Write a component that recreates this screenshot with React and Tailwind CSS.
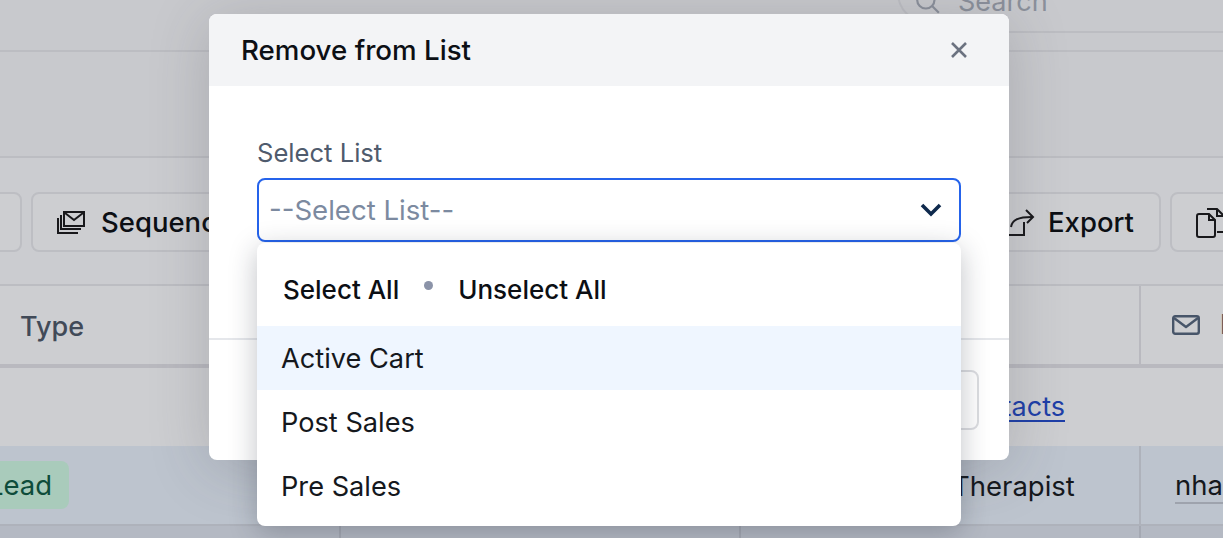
const font = { fontFamily: '"Inter", "Liberation Sans", sans-serif' };

function MailStackIcon() {
  return (
    <svg width="30" height="24" viewBox="0 0 30 24" fill="none" stroke="#18181b" strokeWidth="2">
      <rect x="8" y="1" width="20" height="14" />
      <path d="M9 2l9 7 9-7" />
      <path d="M5 4v14h20" />
      <path d="M2 7v15h20" />
    </svg>
  );
}

function ExportIcon() {
  return (
    <svg width="34" height="28" viewBox="0 0 34 28" fill="none" stroke="#18181b" strokeWidth="2">
      <path d="M4 8L1 16" />
      <path d="M22 13v13H0" />
      <path d="M9 18c1-7 7-10 21-10" />
      <path d="M24 1l7 7-6 6" />
    </svg>
  );
}

function CopyIcon() {
  return (
    <svg width="40" height="30" viewBox="0 0 40 30" fill="none" stroke="#18181b" strokeWidth="2">
      <path d="M3 6h10l6 6v15a2 2 0 0 1-2 2H3a2 2 0 0 1-2-2V8a2 2 0 0 1 2-2z" />
      <path d="M13 6v6h6" />
      <path d="M11 1h10l7 7v16h-7" />
      <path d="M21 1v7h7" />
    </svg>
  );
}

function MailIcon() {
  return (
    <svg width="28" height="20" viewBox="0 0 28 20" fill="none" stroke="#475569" strokeWidth="2.4" strokeLinejoin="round">
      <rect x="1.2" y="1.2" width="25.6" height="17.6" rx="2" />
      <path d="M2 3l12 9 12-9" />
    </svg>
  );
}

function ToolButton({ children, className }) {
  return (
    <div className={`h-[60px] flex items-center rounded-lg border-2 border-[#bdbec3] bg-[#cdced1] text-[27.5px] font-medium text-[#0c0f14] pt-[2px] shrink-0 ${className}`}>
      {children}
    </div>
  );
}

function Page() {
  return (
    <div className="w-[1223px] h-[538px] overflow-hidden bg-[#c8c9cd] flex flex-col">
      <div className="h-[33px] shrink-0 flex justify-end bg-[#c8c9cd] relative">
        <div className="absolute left-[897px] top-[-17px] w-[112px] h-[40px] rounded-bl-[30px] border-l-2 border-b-2 border-[#bdbec3] flex items-center pl-[16px] gap-[17px]">
          <svg width="26" height="26" viewBox="0 0 24 24" fill="none" stroke="#8b909b" strokeWidth="2" className="shrink-0">
            <circle cx="10" cy="10" r="8" />
            <path d="M16 16l6 6" />
          </svg>
          <span className="text-[27px] text-[#8b909b]">Search</span>
        </div>
        <div className="w-[214px] border-b-2 border-[#bcbdc2]" />
      </div>
      <div className="h-[19px] shrink-0 border-b-2 border-[#bcbdc2]" />
      <div className="h-[106px] shrink-0 border-b-2 border-[#bcbdc2]" />
      <div className="h-[128px] shrink-0 flex items-center justify-between bg-[#cbccd0] border-b-2 border-[#bcbdc2] pt-[1px]">
        <div className="flex gap-[9px] ml-[-60px]">
          <ToolButton className="w-[82px]" />
          <ToolButton className="w-[300px] pl-[23px] gap-[15px]">
            <MailStackIcon />
            Sequences
          </ToolButton>
        </div>
        <div className="flex gap-[9px] mr-[-60px]">
          <ToolButton className="w-[200px] pl-[39px] gap-[12px]">
            <ExportIcon />
            Export
          </ToolButton>
          <ToolButton className="w-[113px] pl-[24px]">
            <CopyIcon />
          </ToolButton>
        </div>
      </div>
      <div className="h-[82px] shrink-0 flex bg-[#cdced1] border-b-[4px] border-[#b9b9bf]">
        <div className="w-[1139px] shrink-0 pl-[20px] pt-[5px] flex items-center text-[27px] font-medium text-[#414a58]">Type</div>
        <div className="flex-1 border-l-2 border-[#b9b9bf] pl-[31px] flex items-center gap-[20px] text-[27px] font-medium text-[#414a58]">
          <MailIcon />
          <span>Email</span>
        </div>
      </div>
      <div className="h-[78px] shrink-0 flex items-center justify-end pr-[158px] bg-[#cdced1] text-[27px]">
        <span className="text-[#1e3fa8] underline underline-offset-4">contacts</span>
      </div>
      <div className="h-[80px] shrink-0 flex bg-[#bdc4ce] border-b-2 border-[#aeb2bb] text-[27.5px] text-[#15181d]">
        <div className="w-[339px] shrink-0 flex items-center">
          <span className="h-[48px] flex items-center pl-[34px] pr-[17px] pt-[2px] ml-[-46px] rounded-lg bg-[#a9cbbb] text-[#0e4c3a]">Lead</span>
        </div>
        <div className="w-[400px] shrink-0 border-l-2 border-[#aeb2bb]" />
        <div className="w-[400px] shrink-0 border-l-2 border-[#aeb2bb] flex items-center pl-[211px] pt-[3px]">Therapist</div>
        <div className="flex-1 border-l-2 border-[#aeb2bb] pl-[34px] pt-[1px] flex items-center whitespace-nowrap">
          <span className="border-b-2 border-[#9ea3ad] leading-[34px]">nhartman@mail.com</span>
        </div>
      </div>
      <div className="flex-1 flex bg-[#b4b9c3]">
        <div className="w-[339px] shrink-0" />
        <div className="w-[400px] shrink-0 border-l-2 border-[#a5a9b3]" />
        <div className="w-[400px] shrink-0 border-l-2 border-[#a5a9b3]" />
        <div className="flex-1 border-l-2 border-[#a5a9b3]" />
      </div>
    </div>
  );
}

function Modal() {
  return (
    <div className="absolute left-[209px] top-[14px] w-[800px] h-[446px] rounded-lg bg-white flex flex-col shadow-[0_8px_60px_rgba(60,60,70,0.22)]">
      <div className="h-[72px] shrink-0 rounded-t-lg bg-[#f3f4f6] flex items-center justify-between pl-[32px] pr-[41px]">
        <h2 className="text-[27.7px] font-medium text-[#0c0f14] pt-[2px]">Remove from List</h2>
        <svg width="18" height="18" viewBox="0 0 18 18" fill="none" stroke="#6b7280" strokeWidth="2.6">
          <path d="M2 2l14 14M16 2L2 16" />
        </svg>
      </div>
      <div className="h-[254px] shrink-0 px-[48px] pt-[52px] border-b-2 border-[#e5e7eb]">
        <label className="block h-[40px] text-[25.6px] leading-[30px] text-[#4f5b6d]">Select List</label>
        <div className="relative">
          <div className="h-[64px] rounded-lg border-2 border-[#2563eb] bg-white flex items-center justify-between pl-[10px] pr-[16px]">
            <span className="text-[27.6px] text-[#7c8aa0] pt-[2px]">--Select List--</span>
            <svg width="24" height="16" viewBox="0 0 24 16" fill="none" stroke="#0f2a4d" strokeWidth="3.6">
              <path d="M3 3l9 9 9-9" />
            </svg>
          </div>
          <div className="absolute left-0 right-0 top-[65px] h-[283px] rounded-lg bg-white z-10 shadow-[0_6px_28px_rgba(30,35,50,0.28)] text-[27.2px] text-[#15181d]">
            <div className="h-[83px] flex items-center pl-[26px] pt-[9px] text-[26px] font-medium text-[#0c0f14]">
              <span>Select All</span>
              <span className="w-[9px] h-[9px] rounded-full bg-[#8b93a8] mx-[25px] mb-[8px]" />
              <span>Unselect All</span>
            </div>
            <div className="h-[64px] flex items-center pl-[24px] pt-[2px] bg-[#eff6ff]">Active Cart</div>
            <div className="h-[64px] flex items-center pl-[24px] pt-[2px]">Post Sales</div>
            <div className="h-[64px] flex items-center pl-[24px] pt-[2px]">Pre Sales</div>
          </div>
        </div>
      </div>
      <div className="flex-1 flex items-start justify-end pt-[30px] pr-[30px]">
        <div className="w-[160px] h-[60px] rounded-lg border-2 border-[#dcdde1]" />
      </div>
    </div>
  );
}

export default function App() {
  return (
    <div className="relative w-[1223px] h-[538px] overflow-hidden" style={font}>
      <Page />
      <Modal />
    </div>
  );
}
